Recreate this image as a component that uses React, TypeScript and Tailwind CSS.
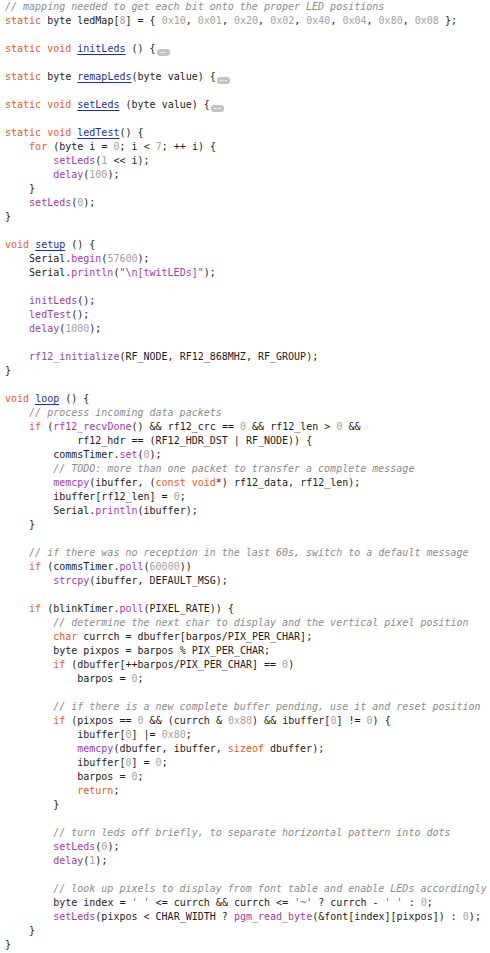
import React from 'react';

const code = `// mapping needed to get each bit onto the proper LED positions
static byte ledMap[8] = { 0x10, 0x01, 0x20, 0x02, 0x40, 0x04, 0x80, 0x08 };

static void initLeds () {
            
static byte remapLeds(byte value) {

static void setLeds (byte value) {

static void ledTest() {
    for (byte i = 0; i < 7; ++ i) {
        setLeds(1 << i);
        delay(100);
    }
    setLeds(0);
}

void setup () {
    Serial.begin(57600);
    Serial.println("\\n[twitLEDs]");

    initLeds();
    ledTest();
    delay(1000);

    rf12_initialize(RF_NODE, RF12_868MHZ, RF_GROUP);
}

void loop () {
    // process incoming data packets
    if (rf12_recvDone() && rf12_crc == 0 && rf12_len > 0 &&
            rf12_hdr == (RF12_HDR_DST | RF_NODE)) {
        commsTimer.set(0);
        // TODO: more than one packet to transfer a complete message
        memcpy(ibuffer, (const void*) rf12_data, rf12_len);
        ibuffer[rf12_len] = 0;
        Serial.println(ibuffer);
    }

    // if there was no reception in the last 60s, switch to a default message
    if (commsTimer.poll(60000))
        strcpy(ibuffer, DEFAULT_MSG);

    if (blinkTimer.poll(PIXEL_RATE)) {
        // determine the next char to display and the vertical pixel position
        char currch = dbuffer[barpos/PIX_PER_CHAR];
        byte pixpos = barpos % PIX_PER_CHAR;
        if (dbuffer[++barpos/PIX_PER_CHAR] == 0)
            barpos = 0;

        // if there is a new complete buffer pending, use it and reset position
        if (pixpos == 0 && (currch & 0x80) && ibuffer[0] != 0) {
            ibuffer[0] |= 0x80;
            memcpy(dbuffer, ibuffer, sizeof dbuffer);
            ibuffer[0] = 0;
            barpos = 0;
            return;
        }

        // turn leds off briefly, to separate horizontal pattern into dots
        setLeds(0);
        delay(1);

        // look up pixels to display from font table and enable LEDs accordingly
        byte index = ' ' <= currch && currch <= '~' ? currch - ' ' : 0;
        setLeds(pixpos < CHAR_WIDTH ? pgm_read_byte(&font[index][pixpos]) : 0);
    }
}`;

const keywords = new Set(['static', 'void', 'for', 'if', 'char', 'const', 'return', 'sizeof']);
const folded = new Set([3, 5, 7]);

type Tok = { t: string; c: string };

function tokenize(line: string): Tok[] {
  const out: Tok[] = [];
  const re = /(\/\/.*$)|("(?:\\.|[^"])*")|('(?:\\.|[^'])*')|(0x[0-9a-fA-F]+|\b\d+\b)|([A-Za-z_][A-Za-z0-9_]*)|(\s+)|(.)/g;
  const isDef = /^(static|void)\b/.test(line);
  let defDone = false;
  let m: RegExpExecArray | null;
  while ((m = re.exec(line))) {
    if (m[1]) out.push({ t: m[1], c: 'cmt' });
    else if (m[2] || m[3]) out.push({ t: m[0], c: 'str' });
    else if (m[4]) out.push({ t: m[4], c: 'num' });
    else if (m[5]) {
      const w = m[5];
      const rest = line.slice(re.lastIndex);
      if (keywords.has(w)) out.push({ t: w, c: 'kw' });
      else if (/^\s*\(/.test(rest)) {
        if (isDef && !defDone) {
          out.push({ t: w, c: 'def' });
          defDone = true;
        } else out.push({ t: w, c: 'call' });
      } else out.push({ t: w, c: 'plain' });
    } else out.push({ t: m[0], c: 'plain' });
  }
  return out;
}

const colors: Record<string, string> = {
  kw: 'text-[#ec5a28]',
  str: 'text-[#a03cb0]',
  num: 'text-[#a3a3a3]',
  cmt: 'text-[#8c8c8c] italic',
  call: 'text-[#a03cb0]',
  def: 'text-[#23329a] underline decoration-[#23329a] underline-offset-2',
  plain: 'text-[#1c1c1c]',
};

function FoldPill() {
  return (
    <span className="inline-flex items-center justify-center gap-[1px] w-[13px] h-[7px] rounded-[3px] bg-[#c3c3c3] ml-[1px] align-[-1px]">
      <span className="w-[1.5px] h-[1.5px] rounded-full bg-white" />
      <span className="w-[1.5px] h-[1.5px] rounded-full bg-white" />
      <span className="w-[1.5px] h-[1.5px] rounded-full bg-white" />
    </span>
  );
}

export default function App() {
  const lines = code.split('\n');
  return (
    <div className="w-[490px] h-[953px] bg-white overflow-hidden pl-[5px] font-['DejaVu_Sans_Mono',monospace] text-[10px]">
      {lines.map((line, i) => (
        <div key={i} className="h-[14px] leading-[14px] whitespace-pre">
          {line.trim() === '' ? ' ' : tokenize(line).map((tk, j) => (
            <span key={j} className={colors[tk.c]}>{tk.t}</span>
          ))}
          {folded.has(i) && <FoldPill />}
        </div>
      ))}
    </div>
  );
}
